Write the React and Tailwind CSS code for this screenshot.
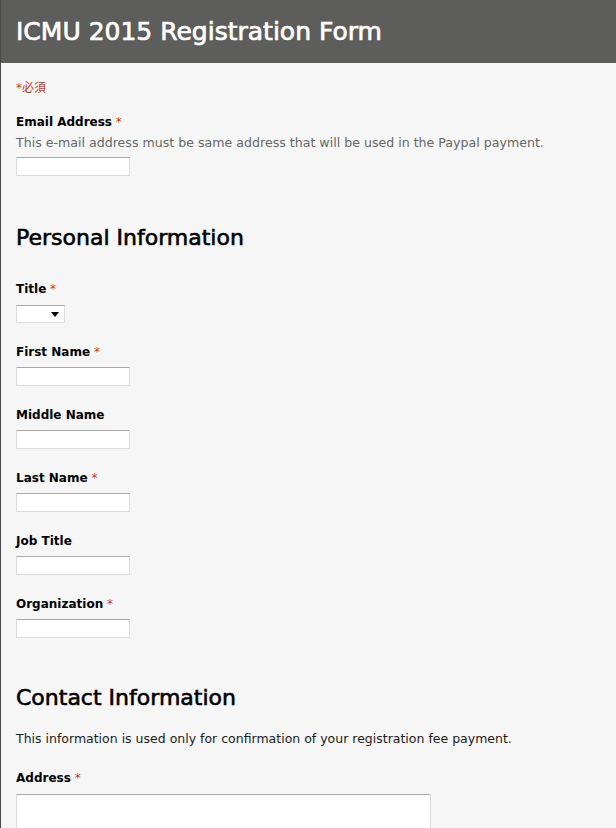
const FIELDS = [
  { label: 'First Name', required: true },
  { label: 'Middle Name' },
  { label: 'Last Name', required: true },
  { label: 'Job Title' },
  { label: 'Organization', required: true },
];

function Star() {
  return <span className="text-[#c43b1d] font-normal"> *</span>;
}

function TextBox({ className = 'w-[114px] h-[19px]' }) {
  return (
    <div className={`${className} bg-white border border-[#dcdcdc] border-t-[#a9a9a9] rounded-[1px]`} />
  );
}

function Label({ children, required }) {
  return (
    <div className="h-[17px] leading-[17px] text-[12px] font-bold text-black">
      {children}
      {required && <Star />}
    </div>
  );
}

export default function App() {
  return (
    <div
      className="w-[616px] h-[828px] overflow-hidden bg-[#f6f6f6] border-l border-[#4a4a4a]"
      style={{ fontFamily: '"DejaVu Sans", "Noto Sans CJK JP", sans-serif' }}
    >
      {/* Header */}
      <header className="h-[63px] bg-[#5d5e5b] flex items-center px-[15px]">
        <h1 className="text-[25px] text-white leading-none [-webkit-text-stroke:0.7px_#fff]">
          ICMU 2015 Registration Form
        </h1>
      </header>

      <div className="px-[15px]">
        <div className="pt-[17px] h-[43px] text-[12px] leading-[17px] text-[#c43b1d]">*必須</div>

        {/* Email */}
        <div className="pt-[8px]">
          <Label required>Email Address</Label>
          <div className="mt-[3px] h-[17px] leading-[17px] text-[12.6px] text-[#666]">
            This e-mail address must be same address that will be used in the Paypal payment.
          </div>
          <div className="mt-[6px]">
            <TextBox />
          </div>
        </div>

        {/* Personal Information */}
        <h2 className="mt-[49px] h-[26px] leading-[26px] text-[22px] text-black [-webkit-text-stroke:0.6px_#000]">
          Personal Information
        </h2>

        <div className="mt-[30px]">
          <Label required>Title</Label>
          <div className="mt-[7px] w-[49px] h-[18px] bg-white border border-[#dcdcdc] border-t-[#a9a9a9] flex items-center justify-end pr-[5px]">
            <svg width="8" height="5" viewBox="0 0 8 5">
              <path d="M0 0h8L4 5z" fill="#000" />
            </svg>
          </div>
        </div>

        {FIELDS.map((f) => (
          <div key={f.label} className="mt-[21px]">
            <Label required={f.required}>{f.label}</Label>
            <div className="mt-[6px]">
              <TextBox />
            </div>
          </div>
        ))}

        {/* Contact Information */}
        <h2 className="mt-[47px] h-[26px] leading-[26px] text-[22px] text-black [-webkit-text-stroke:0.6px_#000]">
          Contact Information
        </h2>
        <div className="mt-[19px] h-[17px] leading-[17px] text-[12.5px] text-[#1a1a1a]">
          This information is used only for confirmation of your registration fee payment.
        </div>

        <div className="mt-[23px]">
          <Label required>Address</Label>
          <div className="mt-[7px]">
            <TextBox className="w-[415px] h-[60px]" />
          </div>
        </div>
      </div>
    </div>
  );
}
